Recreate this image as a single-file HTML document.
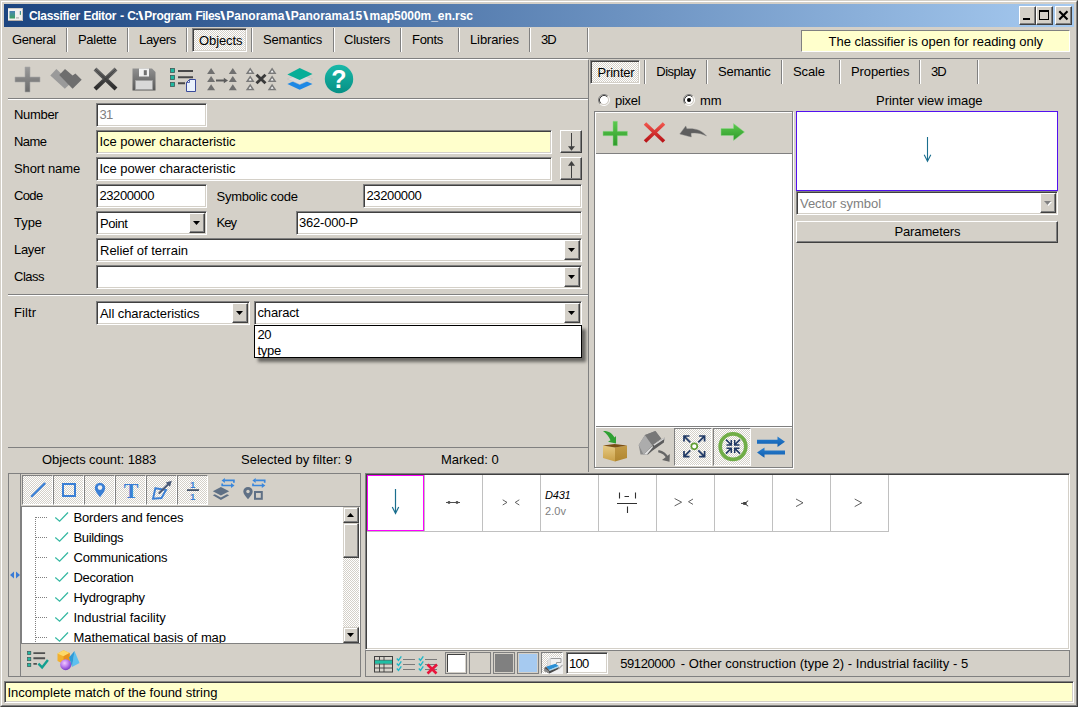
<!DOCTYPE html>
<html lang="en"><head><meta charset="utf-8"><title>Classifier Editor</title>
<style>
html,body{margin:0;padding:0;background:#D4D0C8;}
body{width:1078px;height:707px;overflow:hidden;position:relative;font-family:"Liberation Sans",sans-serif;font-size:13px;color:#000;}
#win{position:absolute;left:0;top:0;width:1078px;height:707px;background:#D4D0C8;overflow:hidden;}
.a{position:absolute;display:block;}
.t{position:absolute;white-space:nowrap;line-height:15px;height:15px;font-size:13px;}
.g{color:#808080;}
.sunk{position:absolute;box-sizing:border-box;background:#fff;border:1px solid;border-color:#808080 #fff #fff #808080;box-shadow:inset 1px 1px 0 #404040,inset -1px -1px 0 #D4D0C8;}
.sunk1{position:absolute;box-sizing:border-box;border:1px solid;border-color:#808080 #fff #fff #808080;}
.btn{position:absolute;box-sizing:border-box;background:#D4D0C8;border:1px solid;border-color:#fff #404040 #404040 #fff;box-shadow:inset -1px -1px 0 #808080,inset 1px 1px 0 #D4D0C8;}
.btn2{position:absolute;box-sizing:border-box;background:#D4D0C8;border:1px solid;border-color:#fff #404040 #404040 #fff;box-shadow:inset -1px -1px 0 #808080;}
.press{position:absolute;box-sizing:border-box;border:1px solid;border-color:#808080 #fff #fff #808080;background-color:#D4D0C8;background-image:linear-gradient(45deg,#fff 25%,transparent 25%,transparent 75%,#fff 75%),linear-gradient(45deg,#fff 25%,transparent 25%,transparent 75%,#fff 75%);background-size:2px 2px;background-position:0 0,1px 1px;}
.dith{background-color:#D4D0C8 !important;background-image:linear-gradient(45deg,#fff 25%,transparent 25%,transparent 75%,#fff 75%),linear-gradient(45deg,#fff 25%,transparent 25%,transparent 75%,#fff 75%);background-size:2px 2px;background-position:0 0,1px 1px;}
.sbtn{position:absolute;box-sizing:border-box;background:#D4D0C8;border:1px solid;border-color:#D4D0C8 #404040 #404040 #D4D0C8;box-shadow:inset -1px -1px 0 #808080,inset 1px 1px 0 #fff;}
.ts{position:absolute;top:0;white-space:nowrap;}

</style></head><body>
<div id="win">
<div class="a" style="left:0px;top:0px;width:1078px;height:707px;box-sizing:border-box;border:1px solid;border-color:#D4D0C8 #404040 #404040 #D4D0C8;"></div>
<div class="a" style="left:1px;top:1px;width:1076px;height:705px;box-sizing:border-box;border:1px solid;border-color:#fff #808080 #808080 #fff;"></div>
<div class="a" style="left:4px;top:4px;width:1070px;height:23px;background:linear-gradient(90deg,#1C4580 0%,#A6CAF0 100%);"></div>
<svg class="a" style="left:8px;top:8px" width="15" height="13" viewBox="0 0 15 13"><defs><linearGradient id="gApp" x1="0" y1="0" x2="0" y2="1"><stop offset="0" stop-color="#4C7FB4"/><stop offset=".35" stop-color="#45909a"/><stop offset="1" stop-color="#3E9E5E"/></linearGradient></defs><rect x="0" y="0" width="15" height="13" fill="#f2f0ee"/><rect x="0" y="0" width="15" height="1" fill="#d0ccc6"/><rect x="0" y="12" width="15" height="1" fill="#b8b0a8"/><rect x="14" y="0" width="1" height="13" fill="#c8c4bc"/><rect x="1.500" y="3" width="5.500" height="7.500" fill="url(#gApp)"/><rect x="8" y="9.300" width="3" height="1.200" fill="#b0b0b0"/><rect x="11.800" y="3" width="1.200" height="3.800" fill="url(#gApp)"/></svg>
<span class="t " style="left:0;top:8.5px;color:#fff;font-weight:bold;font-size:12px"><span class="ts" style="left:28.9px;letter-spacing:-0.303px;">Classifier</span> <span class="ts" style="left:83.5px;letter-spacing:-0.362px;">Editor</span> <span class="ts" style="left:119.6px;transform-origin:0 50%;transform:scaleX(1.050);">-</span> <span class="ts" style="left:127.3px;letter-spacing:-0.886px;">C:</span><span class="ts" style="left:138.3px;transform-origin:0 50%;transform:scaleX(1.645);">\</span><span class="ts" style="left:144.3px;letter-spacing:-0.280px;">Program</span> <span class="ts" style="left:195.5px;letter-spacing:-0.532px;">Files</span><span class="ts" style="left:220.3px;transform-origin:0 50%;transform:scaleX(1.645);">\</span><span class="ts" style="left:226.3px;letter-spacing:0.009px;">Panorama</span><span class="ts" style="left:284.5px;transform-origin:0 50%;transform:scaleX(1.645);">\</span><span class="ts" style="left:290.8px;letter-spacing:0.002px;">Panorama15</span><span class="ts" style="left:363.4px;transform-origin:0 50%;transform:scaleX(1.645);">\</span><span class="ts" style="left:369.6px;letter-spacing:-0.052px;">map5000m_en.rsc</span></span>
<div class="a btn2" style="left:1019px;top:6px;width:17px;height:19px;"><svg width="17" height="19" style="position:absolute;left:-1px;top:-1px"><rect x="4" y="12" width="7" height="2" fill="#000"/></svg></div>
<div class="a btn2" style="left:1036px;top:6px;width:17px;height:19px;"><svg width="17" height="19" style="position:absolute;left:-1px;top:-1px"><rect x="3.500" y="4.500" width="9" height="9" fill="none" stroke="#000"/><rect x="3" y="4" width="10" height="2" fill="#000"/></svg></div>
<div class="a btn2" style="left:1055px;top:6px;width:17px;height:19px;"><svg width="17" height="19" style="position:absolute;left:-1px;top:-1px"><path d="M4.300 5.300l8.200 8.200M12.500 5.300l-8.200 8.200" stroke="#000" stroke-width="2.100" fill="none"/></svg></div>
<span class="t " style="left:12px;top:32px;letter-spacing:-0.379px;">General</span>
<span class="t " style="left:78px;top:32px;letter-spacing:-0.298px;">Palette</span>
<span class="t " style="left:139px;top:32px;letter-spacing:-0.339px;">Layers</span>
<div class="sunk dith" style="left:192px;top:28px;width:55px;height:24px;"></div>
<span class="t " style="left:199px;top:33px;letter-spacing:-0.097px;">Objects</span>
<span class="t " style="left:263px;top:32px;letter-spacing:-0.189px;">Semantics</span>
<span class="t " style="left:344px;top:32px;letter-spacing:-0.211px;">Clusters</span>
<span class="t " style="left:412px;top:32px;letter-spacing:-0.303px;">Fonts</span>
<span class="t " style="left:470px;top:32px;letter-spacing:-0.118px;">Libraries</span>
<span class="t " style="left:541px;top:32px;letter-spacing:-1.062px;">3D</span>
<div class="a" style="left:66px;top:28px;width:1px;height:24px;background:#808080"></div>
<div class="a" style="left:67px;top:28px;width:1px;height:24px;background:#fff"></div>
<div class="a" style="left:127px;top:28px;width:1px;height:24px;background:#808080"></div>
<div class="a" style="left:128px;top:28px;width:1px;height:24px;background:#fff"></div>
<div class="a" style="left:186px;top:28px;width:1px;height:24px;background:#808080"></div>
<div class="a" style="left:187px;top:28px;width:1px;height:24px;background:#fff"></div>
<div class="a" style="left:251px;top:28px;width:1px;height:24px;background:#808080"></div>
<div class="a" style="left:252px;top:28px;width:1px;height:24px;background:#fff"></div>
<div class="a" style="left:333px;top:28px;width:1px;height:24px;background:#808080"></div>
<div class="a" style="left:334px;top:28px;width:1px;height:24px;background:#fff"></div>
<div class="a" style="left:400px;top:28px;width:1px;height:24px;background:#808080"></div>
<div class="a" style="left:401px;top:28px;width:1px;height:24px;background:#fff"></div>
<div class="a" style="left:458px;top:28px;width:1px;height:24px;background:#808080"></div>
<div class="a" style="left:459px;top:28px;width:1px;height:24px;background:#fff"></div>
<div class="a" style="left:529px;top:28px;width:1px;height:24px;background:#808080"></div>
<div class="a" style="left:530px;top:28px;width:1px;height:24px;background:#fff"></div>
<div class="a" style="left:587px;top:28px;width:1px;height:24px;background:#808080"></div>
<div class="a" style="left:588px;top:28px;width:1px;height:24px;background:#fff"></div>
<div class="sunk1" style="left:801px;top:30px;width:269px;height:22px;background:#FFFFCC;"></div>
<span class="t " style="left:828.5px;top:34px;letter-spacing:-0.022px;">The classifier is open for reading only</span>
<div class="a" style="left:8px;top:58px;width:1062px;height:1px;background:#808080"></div>
<div class="a" style="left:8px;top:59px;width:580px;height:1px;background:#fff"></div>
<svg class="a" width="0" height="0" style="left:0;top:0"><defs><linearGradient id="gGray" x1="0" y1="0" x2="0" y2="1"><stop offset="0" stop-color="#9a9a9a"/><stop offset="1" stop-color="#6a6a6a"/></linearGradient><linearGradient id="gDark" x1="0" y1="0" x2="0" y2="1"><stop offset="0" stop-color="#6a6a6a"/><stop offset="1" stop-color="#2a2a2a"/></linearGradient><linearGradient id="gTeal" x1="0" y1="0" x2="0" y2="1"><stop offset="0" stop-color="#19B8A8"/><stop offset="1" stop-color="#079085"/></linearGradient><linearGradient id="gGreen" x1="0" y1="0" x2="0" y2="1"><stop offset="0" stop-color="#5CC94E"/><stop offset="1" stop-color="#2E9A2A"/></linearGradient><linearGradient id="gRed" x1="0" y1="0" x2="0" y2="1"><stop offset="0" stop-color="#F0544C"/><stop offset="1" stop-color="#B81418"/></linearGradient><linearGradient id="gBox" x1="0" y1="0" x2="1" y2="1"><stop offset="0" stop-color="#E8C060"/><stop offset="1" stop-color="#A87820"/></linearGradient></defs></svg>
<svg class="a" style="left:14px;top:66px" width="27" height="27" viewBox="0 0 27 27"><path d="M11 1h5v10h10v5h-10v10h-5v-10h-10v-5h10z" fill="url(#gGray)" stroke="#a8a8a8" stroke-width=".6"/></svg>
<svg class="a" style="left:49px;top:67px" width="34" height="24" viewBox="0 0 34 24"><path d="M1.300 8.600l6.100-6.500 14.600 13.900-6.200 5.700z" fill="#9a9a9a"/><path d="M10.200 8l5.800-6.100 7.600 6.700 2.800-2.200 6.300 6.400-9.100 8.900z" fill="#6e6e6e"/></svg>
<svg class="a" style="left:92px;top:66px" width="27" height="25" viewBox="0 0 27 25"><path d="M3 3l21 20M24 3l-21 20" stroke="url(#gDark)" stroke-width="4.2" fill="none"/><path d="M3 3l21 20M24 3l-21 20" stroke="#303030" stroke-width="1" fill="none" opacity=".6"/></svg>
<svg class="a" style="left:131px;top:67px" width="26" height="25" viewBox="0 0 26 25"><defs><linearGradient id="gFl" x1="0" y1="0" x2="0" y2="1"><stop offset="0" stop-color="#909090"/><stop offset="1" stop-color="#585858"/></linearGradient></defs><path d="M1.500 1.500h19.500l3.500 3.500v18.500h-23z" fill="url(#gFl)"/><rect x="8" y="1.500" width="10" height="8" fill="#f2f2f2"/><rect x="12.800" y="3.200" width="3" height="5" fill="#707070"/><rect x="4.500" y="13.500" width="17" height="9" fill="#d8d8d8" stroke="#a0a0a0" stroke-width=".700"/></svg>
<svg class="a" style="left:169px;top:67px" width="28" height="26" viewBox="0 0 28 26"><g fill="#1FB8A0" stroke="#3a5a58" stroke-width=".800"><rect x="1.500" y="1.500" width="4" height="4"/><rect x="1.500" y="8.500" width="4" height="4"/><rect x="1.500" y="15.500" width="4" height="4"/></g><g stroke="#484848" stroke-width="2"><path d="M9 4h15M9 10.200h15M9 16.200h7"/></g><path d="M20.500 12.500h6v12h-9v-9z" fill="#eaf2fc" stroke="#3a4a9a" stroke-width="1" stroke-linejoin="miter"/><path d="M20.500 12.500v3h-3" fill="none" stroke="#3a4a9a" stroke-width=".800"/></svg>
<svg class="a" style="left:206px;top:66px" width="33" height="27" viewBox="0 0 33 27"><path d="M1.0999999999999996 8h8l-4-6z" fill="#707070"/><path d="M1.0999999999999996 16h8l-4-6z" fill="#707070"/><path d="M1.0999999999999996 24.3h8l-4-6z" fill="#707070"/><path d="M22.8 8h8l-4-6z" fill="#707070"/><path d="M22.8 16h8l-4-6z" fill="#707070"/><path d="M22.8 24.3h8l-4-6z" fill="#707070"/><path d="M10 14.500h9" stroke="#5c5c5c" stroke-width="2"/><path d="M17.800 11.700l4.200 2.800-4.200 2.800z" fill="#5c5c5c"/></svg>
<svg class="a" style="left:245px;top:66px" width="33" height="27" viewBox="0 0 33 27"><path d="M2.2 7.3h6l-3-4.500z" fill="#fafafa" stroke="#7a7a7a" stroke-width="1.500" stroke-linejoin="miter"/><path d="M2.2 15.3h6l-3-4.500z" fill="#fafafa" stroke="#7a7a7a" stroke-width="1.500" stroke-linejoin="miter"/><path d="M2.2 23.6h6l-3-4.500z" fill="#fafafa" stroke="#7a7a7a" stroke-width="1.500" stroke-linejoin="miter"/><path d="M24.1 7.3h6l-3-4.500z" fill="#fafafa" stroke="#7a7a7a" stroke-width="1.500" stroke-linejoin="miter"/><path d="M24.1 15.3h6l-3-4.500z" fill="#fafafa" stroke="#7a7a7a" stroke-width="1.500" stroke-linejoin="miter"/><path d="M24.1 23.6h6l-3-4.500z" fill="#fafafa" stroke="#7a7a7a" stroke-width="1.500" stroke-linejoin="miter"/><path d="M11.500 8.700l9 8.600M20.500 8.700l-9 8.600" stroke="#3a3a3a" stroke-width="2.900"/></svg>
<svg class="a" style="left:286px;top:66px" width="28" height="26" viewBox="0 0 28 26"><path d="M1.400 18l12.300-5.500 12.800 5.500-12.800 5.800z" fill="#1E88E5"/><path d="M1.400 13l12.300-5.500 12.800 5.500-12.800 5.500z" fill="#dadada" stroke="#bcbcbc" stroke-width=".500"/><path d="M1.400 8.500l12.300-6.500 12.800 5.900-12.800 6.100z" fill="#08AE98"/></svg>
<svg class="a" style="left:324px;top:64px" width="30" height="30"><circle cx="15" cy="15" r="14.2" fill="url(#gTeal)"/><text x="15" y="23.500" text-anchor="middle" font-family="Liberation Sans,sans-serif" font-weight="bold" font-size="25" fill="#fff">?</text></svg>
<div class="a" style="left:8px;top:98px;width:580px;height:1px;background:#808080"></div>
<div class="a" style="left:8px;top:99px;width:580px;height:1px;background:#fff"></div>
<div class="a" style="left:588px;top:60px;width:1px;height:412px;background:#808080"></div>
<span class="t " style="left:14px;top:107px;letter-spacing:-0.308px;">Number</span>
<span class="t " style="left:14px;top:134px;letter-spacing:-0.597px;">Name</span>
<span class="t " style="left:14px;top:161px;letter-spacing:-0.120px;">Short name</span>
<span class="t " style="left:14px;top:188px;letter-spacing:-0.645px;">Code</span>
<span class="t " style="left:14px;top:215px;letter-spacing:-0.047px;">Type</span>
<span class="t " style="left:14px;top:242px;letter-spacing:-0.306px;">Layer</span>
<span class="t " style="left:14px;top:269px;letter-spacing:-0.483px;">Class</span>
<span class="t " style="left:14px;top:305px;letter-spacing:0.106px;">Filtr</span>
<div class="sunk" style="left:96px;top:103px;width:111px;height:24px;"></div>
<span class="t g" style="left:99.5px;top:107px;letter-spacing:-0.734px;">31</span>
<div class="sunk" style="left:96px;top:130px;width:456px;height:24px;background:#FFFFCC"></div>
<span class="t " style="left:99.5px;top:134px;letter-spacing:-0.023px;">Ice power characteristic</span>
<div class="sunk" style="left:96px;top:157px;width:456px;height:24px;"></div>
<span class="t " style="left:99.5px;top:161px;letter-spacing:-0.023px;">Ice power characteristic</span>
<div class="a btn2" style="left:560px;top:130px;width:22px;height:23px;"><svg width="22" height="23" style="position:absolute;left:-1px;top:-1px"><path d="M11.500 3v17" stroke="#404040" fill="none"/><path d="M8 16.200h7l-3.500 4.500z" fill="#404040"/></svg></div>
<div class="a btn2" style="left:560px;top:157px;width:22px;height:23px;"><svg width="22" height="23" style="position:absolute;left:-1px;top:-1px"><path d="M11.500 5v16" stroke="#404040" fill="none"/><path d="M8 8.800h7l-3.500 -4.800z" fill="#404040"/></svg></div>
<div class="sunk" style="left:96px;top:184px;width:111px;height:24px;"></div>
<span class="t " style="left:99.5px;top:188px;letter-spacing:-0.418px;">23200000</span>
<span class="t " style="left:216.5px;top:189px;letter-spacing:-0.265px;">Symbolic code</span>
<div class="sunk" style="left:363px;top:184px;width:219px;height:24px;"></div>
<span class="t " style="left:366.5px;top:188px;letter-spacing:-0.355px;">23200000</span>
<div class="sunk" style="left:96px;top:211px;width:111px;height:24px;"></div>
<span class="t " style="left:100px;top:216px;letter-spacing:-0.428px;">Point</span>
<div class="a btn" style="left:189px;top:213px;width:16px;height:20px;"><svg width="16" height="20" style="position:absolute;left:-1px;top:-1px"><path d="M4 8h7l-3.500 4z" fill="#000"/></svg></div>
<span class="t " style="left:216.5px;top:215px;letter-spacing:-0.969px;">Key</span>
<div class="sunk" style="left:296px;top:211px;width:286px;height:24px;"></div>
<span class="t " style="left:299px;top:215px;letter-spacing:-0.191px;">362-000-P</span>
<div class="sunk" style="left:96px;top:238px;width:486px;height:24px;"></div>
<span class="t " style="left:100px;top:243px;letter-spacing:-0.009px;">Relief of terrain</span>
<div class="a btn" style="left:564px;top:240px;width:16px;height:20px;"><svg width="16" height="20" style="position:absolute;left:-1px;top:-1px"><path d="M4 8h7l-3.500 4z" fill="#000"/></svg></div>
<div class="sunk" style="left:96px;top:265px;width:486px;height:24px;"></div>
<div class="a btn" style="left:564px;top:267px;width:16px;height:20px;"><svg width="16" height="20" style="position:absolute;left:-1px;top:-1px"><path d="M4 8h7l-3.500 4z" fill="#000"/></svg></div>
<div class="a" style="left:8px;top:294px;width:580px;height:1px;background:#808080"></div>
<div class="a" style="left:8px;top:295px;width:580px;height:1px;background:#fff"></div>
<div class="sunk" style="left:96px;top:301px;width:154px;height:24px;"></div>
<span class="t " style="left:100px;top:306px;letter-spacing:-0.086px;">All characteristics</span>
<div class="a btn" style="left:232px;top:303px;width:16px;height:20px;"><svg width="16" height="20" style="position:absolute;left:-1px;top:-1px"><path d="M4 8h7l-3.500 4z" fill="#000"/></svg></div>
<div class="sunk" style="left:254px;top:301px;width:328px;height:24px;"></div>
<span class="t " style="left:257.5px;top:305px;letter-spacing:-0.163px;">charact</span>
<div class="a btn" style="left:564px;top:303px;width:16px;height:20px;"><svg width="16" height="20" style="position:absolute;left:-1px;top:-1px"><path d="M4 8h7l-3.500 4z" fill="#000"/></svg></div>
<div class="a" style="left:254px;top:325px;width:328px;height:33px;box-sizing:border-box;background:#fff;border:1px solid #000;box-shadow:4px 4px 3px rgba(0,0,0,.5)"></div>
<span class="t " style="left:257.5px;top:327px;letter-spacing:-0.484px;">20</span>
<span class="t " style="left:257.5px;top:343px;letter-spacing:-0.270px;">type</span>
<div class="a" style="left:8px;top:447px;width:580px;height:1px;background:#808080"></div>
<span class="t " style="left:42px;top:452px;letter-spacing:-0.071px;">Objects count: 1883</span>
<span class="t " style="left:241px;top:452px;letter-spacing:0.021px;">Selected by filter: 9</span>
<span class="t " style="left:441px;top:452px;letter-spacing:-0.024px;">Marked: 0</span>
<div class="sunk dith" style="left:590px;top:60px;width:50px;height:24px;"></div>
<span class="t " style="left:597.5px;top:65px;letter-spacing:-0.185px;">Printer</span>
<span class="t " style="left:656.3px;top:64px;letter-spacing:-0.489px;">Display</span>
<span class="t " style="left:718px;top:64px;letter-spacing:-0.213px;">Semantic</span>
<span class="t " style="left:793px;top:64px;letter-spacing:-0.106px;">Scale</span>
<span class="t " style="left:851px;top:64px;letter-spacing:-0.085px;">Properties</span>
<span class="t " style="left:931px;top:64px;letter-spacing:-0.962px;">3D</span>
<div class="a" style="left:644px;top:60px;width:1px;height:24px;background:#808080"></div>
<div class="a" style="left:645px;top:60px;width:1px;height:24px;background:#fff"></div>
<div class="a" style="left:706px;top:60px;width:1px;height:24px;background:#808080"></div>
<div class="a" style="left:707px;top:60px;width:1px;height:24px;background:#fff"></div>
<div class="a" style="left:781px;top:60px;width:1px;height:24px;background:#808080"></div>
<div class="a" style="left:782px;top:60px;width:1px;height:24px;background:#fff"></div>
<div class="a" style="left:839px;top:60px;width:1px;height:24px;background:#808080"></div>
<div class="a" style="left:840px;top:60px;width:1px;height:24px;background:#fff"></div>
<div class="a" style="left:919px;top:60px;width:1px;height:24px;background:#808080"></div>
<div class="a" style="left:920px;top:60px;width:1px;height:24px;background:#fff"></div>
<div class="a" style="left:977px;top:60px;width:1px;height:24px;background:#808080"></div>
<div class="a" style="left:978px;top:60px;width:1px;height:24px;background:#fff"></div>
<svg class="a" style="left:598px;top:94px" width="12" height="12" viewBox="0 0 12 12"><circle cx="6" cy="6" r="4.200" fill="#fff"/><path d="M2.110 9.890A5.500 5.500 0 0 1 9.890 2.110" stroke="#808080" stroke-width="1" fill="none"/><path d="M9.890 2.110A5.500 5.500 0 0 1 2.110 9.890" stroke="#fff" stroke-width="1" fill="none"/><path d="M2.820 9.180A4.500 4.500 0 0 1 9.180 2.820" stroke="#404040" stroke-width="1" fill="none"/><path d="M9.180 2.820A4.500 4.500 0 0 1 2.820 9.180" stroke="#D4D0C8" stroke-width="1" fill="none"/></svg>
<span class="t " style="left:615px;top:93px;letter-spacing:-0.250px;">pixel</span>
<svg class="a" style="left:683px;top:94px" width="12" height="12" viewBox="0 0 12 12"><circle cx="6" cy="6" r="4.200" fill="#fff"/><path d="M2.110 9.890A5.500 5.500 0 0 1 9.890 2.110" stroke="#808080" stroke-width="1" fill="none"/><path d="M9.890 2.110A5.500 5.500 0 0 1 2.110 9.890" stroke="#fff" stroke-width="1" fill="none"/><path d="M2.820 9.180A4.500 4.500 0 0 1 9.180 2.820" stroke="#404040" stroke-width="1" fill="none"/><path d="M9.180 2.820A4.500 4.500 0 0 1 2.820 9.180" stroke="#D4D0C8" stroke-width="1" fill="none"/><circle cx="6" cy="6" r="2" fill="#000"/></svg>
<span class="t " style="left:700px;top:93px;letter-spacing:-0.186px;">mm</span>
<span class="t " style="left:876px;top:93px;letter-spacing:-0.019px;">Printer view image</span>
<div class="a" style="left:595px;top:112px;width:199px;height:357px;box-sizing:border-box;border:1px solid #fff"></div>
<div class="a" style="left:594px;top:111px;width:199px;height:357px;box-sizing:border-box;border:1px solid #808080"></div>
<div class="a" style="left:596px;top:153px;width:196px;height:274px;background:#fff;border-top:1px solid #808080;border-bottom:1px solid #808080;box-sizing:border-box"></div>
<div class="a" style="left:596px;top:427px;width:196px;height:1px;background:#fff"></div>
<svg class="a" style="left:602px;top:120px" width="27" height="27" viewBox="0 0 27 27"><path d="M11 1.300h4.400v10h10v4.400h-10v10h-4.400v-10h-10v-4.400h10z" fill="url(#gGreen)" stroke="#8fd98a" stroke-width=".500"/></svg>
<svg class="a" style="left:641px;top:120px" width="27" height="26" viewBox="0 0 27 26"><path d="M4 3.500l19 18M23 3.500l-19 18" stroke="url(#gRed)" stroke-width="3.600" fill="none"/></svg>
<svg class="a" style="left:678px;top:122px" width="31" height="18" viewBox="0 0 31 18"><path d="M1.800 12l6-8.100 1 2.900c8.500-.8 15.500 1.700 19.700 7.200c-5-2.600-10-3.500-15.500-2.800l.3 3.800z" fill="#5e5e5e" stroke="#808080" stroke-width=".400"/></svg>
<svg class="a" style="left:720px;top:122px" width="26" height="20" viewBox="0 0 26 20"><path d="M1 6.500h12.500v-5l11 8.500-11 8.500v-5h-12.500z" fill="url(#gGreen)" stroke="#8fd98a" stroke-width=".5"/></svg>
<svg class="a" style="left:600px;top:429px" width="30" height="35" viewBox="0 0 30 35"><defs><linearGradient id="bxL" x1="0" y1="0" x2="0" y2="1"><stop offset="0" stop-color="#E6C982"/><stop offset="1" stop-color="#C9A048"/></linearGradient><linearGradient id="bxR" x1="0" y1="0" x2="0" y2="1"><stop offset="0" stop-color="#C29A46"/><stop offset="1" stop-color="#B08630"/></linearGradient></defs><path d="M3 16.500l12 2v14l-12-3.500z" fill="url(#bxL)"/><path d="M15 18.500l12-2v12.500l-12 3.500z" fill="url(#bxR)"/><path d="M3 16.500l11.500-1.500 12.500 1.500-12 2z" fill="#7A4E14"/><path d="M3 2c5.500-.3 9.500 2.500 11.500 6.500l1.500-1.500v7.500l-8-1.700 2.500-1.600c-1.500-3.500-4-6.500-7.500-9.200z" fill="#2FA033"/></svg>
<svg class="a" style="left:637px;top:429px" width="35" height="35" viewBox="0 0 35 35"><path d="M1.700 16.100l6.300-10 10.400-4.100 5.900 7.800-11.900 6.700-4.400 8.900h-4.500z" fill="#8a8a8a"/><path d="M1.700 16.100l6.300-10 7.400 10.400-8.900 8.900z" fill="#acacac"/><path d="M8 6.100l10.400-4.100 5.900 7.800-8.900 6.700z" fill="#787878"/><path d="M15.400 16.500l12.200-8.100-.7 5.100-11.900 8.400-4 3.500h-4.500z" fill="#5c5c5c"/><path d="M6.500 25.400l8.900-8.400.600.900-6 7.500z" fill="#e0e0e0"/><path d="M16.600 15.600l11-7.200-.2 1.500-10.200 6.800z" fill="#dadada"/><path d="M21.300 22.100c5 1 8 4 9.500 7.500" stroke="#666" stroke-width="2.400" fill="none"/><path d="M32.800 25l-.3 7.800-7.500-1.800z" fill="#666"/></svg>
<div class="a press" style="left:674px;top:428px;width:38px;height:38px;"></div>
<div class="a press" style="left:713px;top:428px;width:38px;height:38px;"></div>
<svg class="a" style="left:674px;top:428px" width="38" height="38" viewBox="0 0 38 38"><g transform="translate(20.300,18.300)"><g transform="rotate(0)"><path d="M-4 -4L-10.500 -10.500M-10.300 -4.800v-5.500h5.500" stroke="#1F3864" stroke-width="1.700" fill="none"/></g><g transform="rotate(90)"><path d="M-4 -4L-10.500 -10.500M-10.300 -4.800v-5.500h5.500" stroke="#1F3864" stroke-width="1.700" fill="none"/></g><g transform="rotate(180)"><path d="M-4 -4L-10.500 -10.500M-10.300 -4.800v-5.500h5.500" stroke="#1F3864" stroke-width="1.700" fill="none"/></g><g transform="rotate(270)"><path d="M-4 -4L-10.500 -10.500M-10.300 -4.800v-5.500h5.500" stroke="#1F3864" stroke-width="1.700" fill="none"/></g><circle r="3" fill="#fff" stroke="#5F9E32" stroke-width="1.700"/></g></svg>
<svg class="a" style="left:713px;top:428px" width="38" height="38" viewBox="0 0 38 38"><g transform="translate(20,18.600)"><circle r="12.800" fill="none" stroke="#70AD47" stroke-width="3.700"/><g transform="rotate(0)"><path d="M-1.800 -1.800L-7 -7M-1.700 -6.500v4.800h-4.800" stroke="#1F3864" stroke-width="1.500" fill="none"/></g><g transform="rotate(90)"><path d="M-1.800 -1.800L-7 -7M-1.700 -6.500v4.800h-4.800" stroke="#1F3864" stroke-width="1.500" fill="none"/></g><g transform="rotate(180)"><path d="M-1.800 -1.800L-7 -7M-1.700 -6.500v4.800h-4.800" stroke="#1F3864" stroke-width="1.500" fill="none"/></g><g transform="rotate(270)"><path d="M-1.800 -1.800L-7 -7M-1.700 -6.500v4.800h-4.800" stroke="#1F3864" stroke-width="1.500" fill="none"/></g></g></svg>
<svg class="a" style="left:756px;top:435px" width="30" height="24" viewBox="0 0 30 24"><defs><linearGradient id="gBl" x1="0" y1="0" x2="0" y2="1"><stop offset="0" stop-color="#2A80D0"/><stop offset="1" stop-color="#0F5CAE"/></linearGradient></defs><path d="M1 4.700h20.500v-3.200l7.500 5.200-7.500 5.200v-3.200h-20.500z" fill="url(#gBl)"/><path d="M29 15.600h-20.500v-3.200l-7.500 5.200 7.500 5.200v-3.200h20.500z" fill="url(#gBl)"/></svg>
<div class="a" style="left:796px;top:111px;width:262px;height:80px;box-sizing:border-box;background:#fff;border:1px solid #5210F0"></div>
<svg class="a" style="left:921px;top:135px" width="12" height="28" viewBox="0 0 12 28"><path d="M6.500 2v24.500M3.200 19.700l3.300 6.500 3.300-6.500" stroke="#1A6E8E" fill="none" stroke-width="1.100"/></svg>
<div class="sunk" style="left:796px;top:191px;width:262px;height:24px;"></div>
<span class="t g" style="left:800px;top:196px;letter-spacing:-0.050px;">Vector symbol</span>
<div class="a btn" style="left:1040px;top:193px;width:16px;height:20px;"><svg width="16" height="20" style="position:absolute;left:-1px;top:-1px"><path d="M5 9h7l-3.500 4z" fill="#fff"/><path d="M4 8h7l-3.500 4z" fill="#808080"/></svg></div>
<div class="a btn" style="left:796px;top:221px;width:262px;height:22px;"></div>
<span class="t " style="left:894.5px;top:224px;letter-spacing:-0.140px;">Parameters</span>
<div class="a" style="left:8px;top:473px;width:353px;height:204px;box-sizing:border-box;border:1px solid #808080"></div>
<div class="a" style="left:20px;top:474px;width:1px;height:202px;background:#808080"></div>
<svg class="a" style="left:9px;top:570px" width="12" height="10" viewBox="0 0 12 10"><path d="M5 1.500v7L1 5zM7 1.500v7l4-3.500z" fill="#3A7BD5"/></svg>
<div class="a press" style="left:22px;top:475px;width:31px;height:30px;"></div>
<div class="a press" style="left:53px;top:475px;width:31px;height:30px;"></div>
<div class="a press" style="left:84px;top:475px;width:31px;height:30px;"></div>
<div class="a press" style="left:115px;top:475px;width:31px;height:30px;"></div>
<div class="a press" style="left:146px;top:475px;width:31px;height:30px;"></div>
<div class="a press" style="left:177px;top:475px;width:31px;height:30px;"></div>
<svg class="a" style="left:22px;top:475px" width="30" height="29" viewBox="0 0 30 29"><path d="M9.800 21.200L22.600 8.600" stroke="#3A7FD5" stroke-width="2.200" stroke-linecap="round" fill="none"/></svg>
<svg class="a" style="left:53px;top:475px" width="30" height="29" viewBox="0 0 30 29"><rect x="10" y="9" width="12" height="12" fill="none" stroke="#3A7FD5" stroke-width="2"/></svg>
<svg class="a" style="left:84px;top:475px" width="30" height="29" viewBox="0 0 30 29"><path d="M16 22.200c-3-3.800-5.200-6.500-5.200-9.200a5.200 5.200 0 0 1 10.400 0c0 2.700-2.200 5.400-5.200 9.200z" fill="#3A7FD5"/><circle cx="16" cy="12.600" r="2.300" fill="#f0f0f0"/></svg>
<svg class="a" style="left:115px;top:475px" width="30" height="29"><text x="16" y="23" text-anchor="middle" font-family="Liberation Serif,serif" font-size="22" font-weight="bold" fill="#3A7FD5">T</text></svg>
<svg class="a" style="left:146px;top:475px" width="30" height="29" viewBox="0 0 30 29"><path d="M9.400 13.200l10.600 1.800-4.500 8-8.500.700z" fill="none" stroke="#3A7FD5" stroke-width="1.900" stroke-linejoin="miter"/><path d="M13.300 18L22.500 9" stroke="#4A5A78" stroke-width="1.900" stroke-linecap="round"/><path d="M25.800 5.700l-1.800 6-4.200-4.200z" fill="#4A5A78"/></svg>
<svg class="a" style="left:177px;top:475px" width="30" height="29"><text x="15.700" y="13.200" text-anchor="middle" font-family="Liberation Sans,sans-serif" font-size="9.500" font-weight="bold" fill="#3A7FD5">1</text><rect x="10" y="14.200" width="12" height="1.800" fill="#44546A"/><text x="15.700" y="24.500" text-anchor="middle" font-family="Liberation Sans,sans-serif" font-size="9.500" font-weight="bold" fill="#3A7FD5">1</text></svg>
<svg class="a" style="left:208px;top:475px" width="30" height="29" viewBox="0 0 30 29"><path d="M4.800 16.200l8.100-4.200 8.300 4.200-8.300 4.200z" fill="#5F7085"/><path d="M4.800 20.200l2-1 6.100 3.300 6.100-3.300 2.200 1-8.300 4.700z" fill="#5F7085"/><g stroke="#3A87DC" stroke-width="1.700" fill="none"><path d="M16.6 5.300h9.3v2.400M14.2 8.400v2.100h9"/></g><path d="M13.6 5.400l3.300-2.500v5z" fill="#3A87DC"/><path d="M26.5 10.500l-3.500-2.600v5.200z" fill="#3A87DC"/></svg>
<svg class="a" style="left:239px;top:475px" width="30" height="29" viewBox="0 0 30 29"><path d="M9 24.300c-2.700-3.400-4.700-5.600-4.700-7.800a4.700 4.600 0 0 1 9.400 0c0 2.200-2 4.400-4.700 7.800z" fill="#5F7085"/><circle cx="9" cy="16.500" r="1.700" fill="#D4D0C8"/><rect x="16" y="17" width="6.800" height="6.800" fill="none" stroke="#5F7085" stroke-width="2"/><g stroke="#3A87DC" stroke-width="1.700" fill="none"><path d="M16.4 5.300h9.3v2.400M14.0 8.400v2.100h9"/></g><path d="M13.4 5.400l3.300-2.500v5z" fill="#3A87DC"/><path d="M26.3 10.500l-3.500-2.600v5.200z" fill="#3A87DC"/></svg>
<svg class="a" style="left:25px;top:649px" width="25" height="22" viewBox="0 0 25 22"><g fill="#21B8A2" stroke="#3a5a58" stroke-width=".700"><rect x="2.600" y="2.400" width="3.200" height="3.200"/><rect x="2.600" y="8.500" width="3.200" height="3.200"/><rect x="2.600" y="14.400" width="3.200" height="3.200"/></g><g stroke="#505050" stroke-width="1.900"><path d="M8.400 4.100h11.700M8.400 9.200h11.700M8.400 14.900h3.500"/></g><path d="M13.400 14.700l3.700 3.700 5.800-7.400" stroke="#13A090" stroke-width="2.400" fill="none"/></svg>
<svg class="a" style="left:56px;top:648px" width="26" height="24" viewBox="0 0 26 24"><defs><radialGradient id="gPur" cx=".4" cy=".35" r=".65"><stop offset="0" stop-color="#F0C8FF"/><stop offset=".5" stop-color="#C080F0"/><stop offset="1" stop-color="#7A3CC8"/></radialGradient></defs><path d="M1.500 5.500l6-3.300 6.200 2.800v8l-6.200 3-6-3z" fill="#F2B02E"/><path d="M1.500 5.500l6 2.700 6.200-3.200-6.200-2.800z" fill="#FCD868"/><path d="M7.500 8.200v7.800l6.200-3v-8z" fill="#E8901C"/><path d="M18.500 3l5 12-7.500 4z" fill="#5CC0F0"/><path d="M18.500 3l-5.500 6.500 3 9.500z" fill="#2E9AD8"/><circle cx="9.700" cy="16.700" r="5.500" fill="url(#gPur)"/></svg>
<div class="a" style="left:21px;top:506px;width:339px;height:138px;background:#808080"></div>
<div class="a" style="left:22px;top:507px;width:337px;height:136px;background:#fff"></div>
<svg class="a" style="left:22px;top:506px" width="321" height="137"><path d="M13.5 11v126" stroke="#808080" stroke-dasharray="1 1" fill="none"/><path d="M14 11.5h12" stroke="#808080" stroke-dasharray="1 1" fill="none"/><path d="M33.300 11.5l4.300 3.700 8.400-8.700" stroke="#35B8A2" stroke-width="1.250" fill="none"/><path d="M14 31.5h12" stroke="#808080" stroke-dasharray="1 1" fill="none"/><path d="M33.300 31.5l4.300 3.700 8.400-8.700" stroke="#35B8A2" stroke-width="1.250" fill="none"/><path d="M14 51.5h12" stroke="#808080" stroke-dasharray="1 1" fill="none"/><path d="M33.300 51.5l4.300 3.700 8.400-8.700" stroke="#35B8A2" stroke-width="1.250" fill="none"/><path d="M14 71.5h12" stroke="#808080" stroke-dasharray="1 1" fill="none"/><path d="M33.300 71.5l4.300 3.700 8.400-8.700" stroke="#35B8A2" stroke-width="1.250" fill="none"/><path d="M14 91.5h12" stroke="#808080" stroke-dasharray="1 1" fill="none"/><path d="M33.300 91.5l4.300 3.700 8.400-8.700" stroke="#35B8A2" stroke-width="1.250" fill="none"/><path d="M14 111.5h12" stroke="#808080" stroke-dasharray="1 1" fill="none"/><path d="M33.300 111.5l4.300 3.700 8.400-8.700" stroke="#35B8A2" stroke-width="1.250" fill="none"/><path d="M14 131.5h12" stroke="#808080" stroke-dasharray="1 1" fill="none"/><path d="M33.300 131.5l4.300 3.700 8.400-8.700" stroke="#35B8A2" stroke-width="1.250" fill="none"/></svg>
<div class="a" style="left:0;top:506px;width:343px;height:137px;overflow:hidden"><div class="a" style="left:0;top:-506px">
<span class="t " style="left:73.5px;top:510px;letter-spacing:-0.163px;">Borders and fences</span>
<span class="t " style="left:73.5px;top:530px;letter-spacing:-0.341px;">Buildings</span>
<span class="t " style="left:73.5px;top:550px;letter-spacing:-0.216px;">Communications</span>
<span class="t " style="left:73.5px;top:570px;letter-spacing:-0.287px;">Decoration</span>
<span class="t " style="left:73.5px;top:590px;letter-spacing:-0.285px;">Hydrography</span>
<span class="t " style="left:73.5px;top:610px;letter-spacing:-0.010px;">Industrial facility</span>
<span class="t " style="left:73.5px;top:630px;letter-spacing:-0.089px;">Mathematical basis of map</span>
</div></div>
<div class="a dith" style="left:343px;top:507px;width:16px;height:136px;"></div>
<div class="a sbtn" style="left:343px;top:507px;width:16px;height:16px;"><svg width="16" height="16" style="position:absolute;left:-1px;top:-1px"><path d="M4 10h7l-3.500-4z" fill="#000"/></svg></div>
<div class="a sbtn" style="left:343px;top:523px;width:16px;height:35px;"></div>
<div class="a sbtn" style="left:343px;top:627px;width:16px;height:16px;"><svg width="16" height="16" style="position:absolute;left:-1px;top:-1px"><path d="M4 6h7l-3.500 4z" fill="#000"/></svg></div>
<div class="a" style="left:359px;top:507px;width:1px;height:137px;background:#fff"></div>
<div class="a" style="left:21px;top:643px;width:339px;height:1px;background:#808080"></div>
<div class="sunk" style="left:365px;top:473px;width:705px;height:177px;"></div>
<div class="a" style="left:367px;top:475px;width:58px;height:57px;box-sizing:border-box;border-right:1px solid #C0C0C0;border-bottom:1px solid #C0C0C0"></div>
<div class="a" style="left:425px;top:475px;width:58px;height:57px;box-sizing:border-box;border-right:1px solid #C0C0C0;border-bottom:1px solid #C0C0C0"></div>
<div class="a" style="left:483px;top:475px;width:58px;height:57px;box-sizing:border-box;border-right:1px solid #C0C0C0;border-bottom:1px solid #C0C0C0"></div>
<div class="a" style="left:541px;top:475px;width:58px;height:57px;box-sizing:border-box;border-right:1px solid #C0C0C0;border-bottom:1px solid #C0C0C0"></div>
<div class="a" style="left:599px;top:475px;width:58px;height:57px;box-sizing:border-box;border-right:1px solid #C0C0C0;border-bottom:1px solid #C0C0C0"></div>
<div class="a" style="left:657px;top:475px;width:58px;height:57px;box-sizing:border-box;border-right:1px solid #C0C0C0;border-bottom:1px solid #C0C0C0"></div>
<div class="a" style="left:715px;top:475px;width:58px;height:57px;box-sizing:border-box;border-right:1px solid #C0C0C0;border-bottom:1px solid #C0C0C0"></div>
<div class="a" style="left:773px;top:475px;width:58px;height:57px;box-sizing:border-box;border-right:1px solid #C0C0C0;border-bottom:1px solid #C0C0C0"></div>
<div class="a" style="left:831px;top:475px;width:58px;height:57px;box-sizing:border-box;border-right:1px solid #C0C0C0;border-bottom:1px solid #C0C0C0"></div>
<div class="a" style="left:367px;top:475px;width:57px;height:56px;box-sizing:border-box;border:1px solid #FF00FF"></div>
<svg class="a" style="left:367px;top:475px" width="522" height="56" fill="none"><path d="M28.500 14v24.500M25.300 32l3.200 6.500 3.200-6.500" stroke="#1A6E8E" stroke-width="1.200"/><path d="M79 27.500h14" stroke="#505050" stroke-width="1"/><circle cx="82" cy="27.500" r="1.400" fill="#505050"/><circle cx="90" cy="27.500" r="1.400" fill="#505050"/><path d="M135.700 24.800l4.300 2.600-4.300 2.600M152.300 24.800l-4.100 2.600 4.100 2.600" stroke="#505050" stroke-width=".900"/><path d="M252.500 17.500v6M268.500 17.500v6M257.500 21.500h4.500M250 28.500h20M260.500 31.500v6.500" stroke="#303030" stroke-width="1.100"/><path d="M307.600 23.500l7 3.700-7 3.700M326 24l-4.500 2.700 4.500 2.700" stroke="#505050" stroke-width=".900"/><path d="M374 28.400h3" stroke="#404040" stroke-width="1"/><rect x="376.200" y="27" width="3.400" height="2.900" fill="#404040"/><path d="M381.200 25.900q-1.800 .300 -1.900 1.600M381.200 31q-1.800 -.300 -1.900 -1.600" stroke="#404040" stroke-width="1" fill="none"/><path d="M429 24l7 3.800-7 3.800" stroke="#505050" stroke-width=".900"/><path d="M487.700 24l7 3.800-7 3.800" stroke="#505050" stroke-width=".900"/></svg>
<span class="t " style="left:545px;top:488px;letter-spacing:-0.199px;font-style:italic;font-size:11px">D431</span>
<span class="t " style="left:545px;top:504px;letter-spacing:0.051px;font-size:11px;color:#808080">2.0v</span>
<div class="a" style="left:365px;top:650px;width:705px;height:27px;box-sizing:border-box;border:1px solid #808080"></div>
<div class="a" style="left:445px;top:652px;width:22px;height:22px;box-sizing:border-box;border:1px solid #808080"></div>
<div class="a" style="left:447px;top:654px;width:18px;height:18px;background:#fff;box-sizing:border-box;border-top:1px solid #404040;border-left:1px solid #404040"></div>
<div class="a" style="left:469px;top:652px;width:22px;height:22px;box-sizing:border-box;border:1px solid #808080"></div>
<div class="a" style="left:471px;top:654px;width:18px;height:18px;background:#D4D0C8"></div>
<div class="a" style="left:493px;top:652px;width:22px;height:22px;box-sizing:border-box;border:1px solid #808080"></div>
<div class="a" style="left:495px;top:654px;width:18px;height:18px;background:#808080"></div>
<div class="a" style="left:517px;top:652px;width:22px;height:22px;box-sizing:border-box;border:1px solid #808080"></div>
<div class="a" style="left:519px;top:654px;width:18px;height:18px;background:#A6CAF0"></div>
<div class="a press" style="left:541px;top:652px;width:22px;height:22px;"></div>
<svg class="a" style="left:374px;top:656px" width="19" height="17" viewBox="0 0 19 17"><rect x=".500" y=".500" width="18" height="15.500" fill="#D8D4CC" stroke="#404040"/><rect x="1" y="4.500" width="17" height="3" fill="#1FBFA5"/><path d="M.500 4.300h18M.500 8h18M.500 12h18M5.500 .500v15.500M10 .500v15.500" stroke="#404040" stroke-width=".900" fill="none"/><rect x="1" y="4.500" width="17" height="3" fill="#1FBFA5"/></svg>
<svg class="a" style="left:396px;top:655px" width="20" height="19" viewBox="0 0 20 19"><path d="M.800 3.5l1.700 1.900 2.800-4" stroke="#1FB8C8" stroke-width="1.400" fill="none"/><path d="M.800 8.5l1.700 1.900 2.800-4" stroke="#1FB8C8" stroke-width="1.400" fill="none"/><path d="M.800 13.5l1.700 1.900 2.800-4" stroke="#1FB8C8" stroke-width="1.400" fill="none"/><path d="M7 4.500h12M7 9.500h12M7 14.500h12" stroke="#7a7a7a" stroke-width="1.100"/></svg>
<svg class="a" style="left:418px;top:655px" width="21" height="20" viewBox="0 0 21 20"><path d="M.800 3.5l1.700 1.900 2.800-4" stroke="#1FB8C8" stroke-width="1.400" fill="none"/><path d="M.800 8.5l1.700 1.900 2.800-4" stroke="#1FB8C8" stroke-width="1.400" fill="none"/><path d="M.800 13.5l1.700 1.900 2.800-4" stroke="#1FB8C8" stroke-width="1.400" fill="none"/><path d="M7 4.500h12M7 9.500h12M7 14.500h12" stroke="#7a7a7a" stroke-width="1.100"/><path d="M9.500 9.500l9 9M19 9.500l-9.500 9" stroke="#E8143C" stroke-width="2.600"/></svg>
<svg class="a" style="left:541px;top:652px" width="22" height="22" viewBox="0 0 22 22"><path d="M7 5h15v17h-12l-3-3z" fill="#f1f1f1"/><path d="M9.500 6.500h10.500v4h-4.500v1.500" fill="none" stroke="#9a9a9a" stroke-width="1"/><path d="M6.500 8.500l3-2.500v8l-3 2z" fill="#e2e2e2" stroke="#c4c4c4" stroke-width=".500"/><path d="M5 14.800l9.500-3 3.200 2.200-9.700 4z" fill="#2A8FD5"/><path d="M8 18l9.700-4 .5 1-9.700 4z" fill="#9fd4f2"/><path d="M3.500 16l1.500-1.200 3 3.200 .5 1 9.500-3.800v1.500l-9.500 4.800-5-2.500z" fill="#4a4a4a"/><path d="M3.500 16l4.500 3v2.500l-4.500-2.500z" fill="#8a8a8a"/><path d="M17.500 17l4-4" stroke="#b0b0b0" stroke-width="1.200"/></svg>
<div class="sunk" style="left:566px;top:652px;width:42px;height:22px;"></div>
<span class="t " style="left:569px;top:656px;letter-spacing:-0.734px;">100</span>
<span class="t " style="left:0;top:656px;"><span class="ts" style="left:620.2px;letter-spacing:-0.405px;">59120000</span> <span class="ts" style="left:680.8px;letter-spacing:0.052px;">- Other construction (type 2) - Industrial facility - 5</span></span>
<div class="sunk" style="left:4px;top:681px;width:1070px;height:22px;background:#FFFFCC"></div>
<span class="t " style="left:7.5px;top:685px;letter-spacing:-0.011px;">Incomplete match of the found string</span>
</div>
</body></html>
